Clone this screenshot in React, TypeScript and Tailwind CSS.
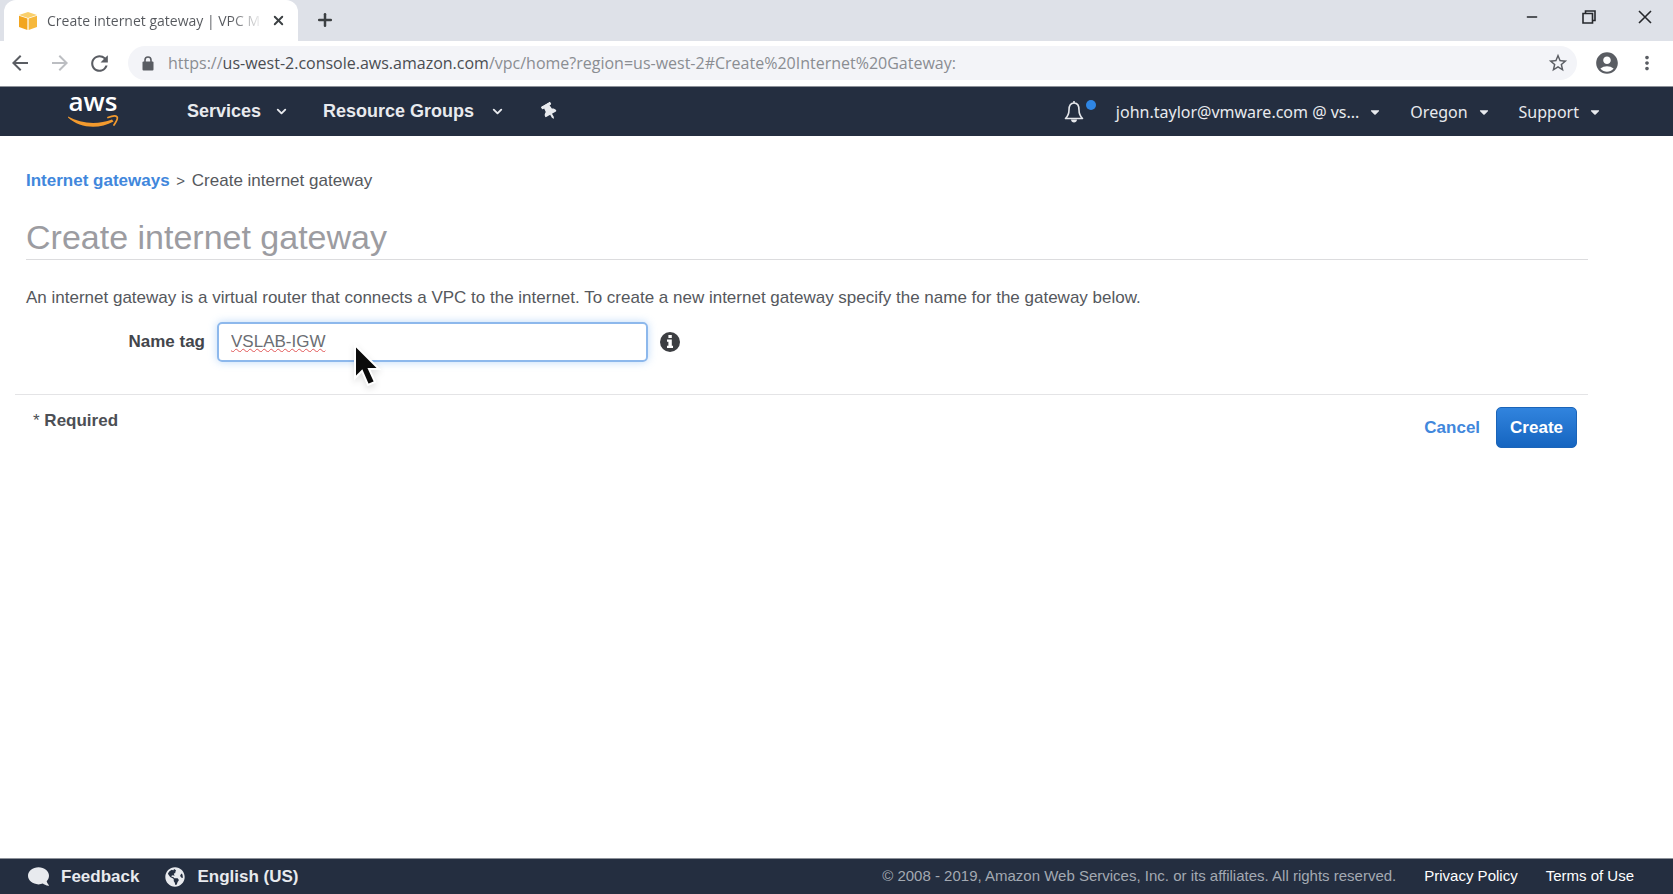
import type { ReactNode } from 'react'
import { ChevronDown, Minus, Plus, X } from 'lucide-react'
import { FaCaretDown, FaComment, FaGlobeAmericas, FaThumbtack } from 'react-icons/fa'
import {
  MdAccountCircle,
  MdArrowBack,
  MdArrowForward,
  MdMoreVert,
  MdRefresh,
  MdStarBorder,
} from 'react-icons/md'

function CubeIcon() {
  return (
    <svg viewBox="0 0 20 20" className="size-5 shrink-0" aria-hidden="true">
      <path d="M10 1 19 4 10 7 1 4z" fill="#f9cf6b" />
      <path d="M1 4.8 9.4 7.4V19L1 16z" fill="#f2a51f" />
      <path d="M19 4.8 10.6 7.4V19L19 16z" fill="#f6b83c" />
    </svg>
  )
}

function LockIcon() {
  return (
    <svg viewBox="0 0 12 15" className="h-[15px] w-3" aria-hidden="true">
      <path d="M3 6V4a3 3 0 0 1 6 0v2" fill="none" stroke="currentColor" strokeWidth="1.6" />
      <rect x="0.500" y="5.500" width="11" height="9" rx="1" fill="currentColor" />
    </svg>
  )
}

function InfoIcon() {
  return (
    <svg viewBox="0 0 20 20" className="ml-3 size-5" aria-hidden="true">
      <circle cx="10" cy="10" r="10" fill="#3c3e42" />
      <path d="M8.400 3h3.400v3H8.400zM7 7.500h4.800v6.300H13V16H7v-2.200h1.400V9.700H7z" fill="#fff" />
    </svg>
  )
}

function AwsLogo() {
  return (
    <a href="#home" className="flex w-[52px] flex-col items-center pb-[5px] text-white" aria-label="AWS home">
      <span className="font-['Open_Sans',sans-serif] text-[26px] leading-[22px] font-semibold">aws</span>
      <svg viewBox="0 0 52 14" className="mt-[3px] h-[14px] w-[52px]" aria-hidden="true">
        <path d="M1 1.500C14 9 31 10 45 4.500L46.500 6.500C32 14.500 13 13.500 1 2.500z" fill="#f29a2e" />
        <path d="M41 2.500C45 1 49 .8 50 1.800S49 7 47 10" fill="none" stroke="#f29a2e" strokeWidth="1.8" strokeLinecap="round" />
      </svg>
    </a>
  )
}

function BellIcon() {
  return (
    <svg viewBox="0 0 20 24" className="h-6 w-5" fill="none" stroke="#e5e7eb" strokeWidth="1.6" aria-hidden="true">
      <path d="M10 3C6 3 5 6 5 10c0 4-1 6-3.5 8.5h17C16 16 15 14 15 10c0-4-1-7-5-7z" strokeLinejoin="round" />
      <path d="M10 1v2" />
      <path d="M7 19.500h6c0 4-6 4-6 0z" fill="#e5e7eb" stroke="none" />
    </svg>
  )
}

function MenuButton({ children }: { children: ReactNode }) {
  return (
    <button type="button" className="flex items-center gap-[9px] font-['Noto_Sans','Open_Sans',sans-serif] text-[16px]">
      {children}
      <FaCaretDown size={14} aria-hidden="true" />
    </button>
  )
}

function TabStrip() {
  return (
    <div className="flex h-[41px] items-end bg-[#dee1e8] text-[#3c4043]">
      <div className="ml-1 flex h-full w-[294px] items-center rounded-t-xl bg-white pr-3 pl-[14px]">
        <CubeIcon />
        <span className="ml-[9px] w-[216px] bg-gradient-to-r from-[#55585d] from-85% to-transparent bg-clip-text text-[14px] whitespace-nowrap text-transparent">
          Create internet gateway | VPC M
        </span>
        <button type="button" aria-label="Close tab" className="ml-2">
          <X size={15} strokeWidth={3} />
        </button>
      </div>
      <button type="button" aria-label="New tab" className="mb-[11px] ml-[17px]">
        <Plus size={20} strokeWidth={3} />
      </button>
      <div className="mb-4 ml-auto flex items-center gap-[42px] pr-[21px] text-[#26282c]">
        <button type="button" aria-label="Minimize">
          <Minus size={16} />
        </button>
        <button type="button" aria-label="Restore">
          <svg viewBox="0 0 14 14" className="size-[14px]" fill="none" stroke="currentColor" strokeWidth="1.6">
            <path d="M1 3.5h9.500v9.500H1zM3.500 3V1H13v9.500h-2" />
          </svg>
        </button>
        <button type="button" aria-label="Close window">
          <svg viewBox="0 0 14 14" className="size-[14px]" fill="none" stroke="currentColor" strokeWidth="1.6">
            <path d="M1 1 13 13M13 1 1 13" />
          </svg>
        </button>
      </div>
    </div>
  )
}

function AddressBar() {
  return (
    <div className="flex h-[46px] items-center border-b border-[#8d9199] bg-white pr-[15px] pb-px pl-2 text-[#5a5d63]">
      <button type="button" aria-label="Back">
        <MdArrowBack size={24} />
      </button>
      <button type="button" aria-label="Forward" className="ml-4 text-[#bcbec2]">
        <MdArrowForward size={24} />
      </button>
      <button type="button" aria-label="Reload" className="ml-[15px]">
        <MdRefresh size={25} />
      </button>
      <div className="ml-4 flex h-[34px] flex-1 items-center rounded-full bg-[#f3f4f8] pr-2 pl-[14px]">
        <LockIcon />
        <p className="ml-[14px] flex-1 text-[16px] whitespace-nowrap text-[#8a8d92]">
          https://<span className="text-[#4a4d52]">us-west-2.console.aws.amazon.com</span>
          /vpc/home?region=us-west-2#Create%20Internet%20Gateway:
        </p>
        <button type="button" aria-label="Bookmark">
          <MdStarBorder size={22} />
        </button>
      </div>
      <button type="button" aria-label="Profile" className="ml-[17px]">
        <MdAccountCircle size={26} />
      </button>
      <button type="button" aria-label="Browser menu" className="ml-4">
        <MdMoreVert size={22} />
      </button>
    </div>
  )
}

function ConsoleNav() {
  return (
    <nav className="flex h-[49px] items-center bg-[#242e40] pr-[71px] pl-[67px] text-[#e8eaee]">
      <AwsLogo />
      <button type="button" className="ml-[68px] flex items-center gap-[13px] text-[18px] font-bold">
        Services
        <ChevronDown size={15} strokeWidth={3} />
      </button>
      <button type="button" className="ml-[34px] flex items-center gap-4 text-[18px] font-bold">
        Resource Groups
        <ChevronDown size={15} strokeWidth={3} />
      </button>
      <button type="button" aria-label="Pin shortcuts" className="ml-9">
        <FaThumbtack size={17} className="-rotate-30" />
      </button>
      <div className="ml-auto flex items-center gap-7">
        <button type="button" aria-label="Notifications" className="relative mr-1">
          <BellIcon />
          <span className="absolute top-0 -right-3 size-[10px] rounded-full bg-[#2f86e4]" />
        </button>
        <MenuButton>john.taylor@vmware.com @ vs...</MenuButton>
        <MenuButton>Oregon</MenuButton>
        <MenuButton>Support</MenuButton>
      </div>
    </nav>
  )
}

function Pointer() {
  return (
    <svg viewBox="-1 -1 28 44" className="absolute top-[21px] left-[136px] h-11 w-7 drop-shadow-md" aria-hidden="true">
      <path d="M1 1V34L8 27 14 41 21 38 15 25H25z" fill="#0b0b0b" stroke="#fff" strokeWidth="2" />
    </svg>
  )
}

export default function App() {
  return (
    <div className="flex min-h-screen flex-col bg-white font-['Liberation_Sans',Arial,sans-serif] text-[#55585d]">
      <header>
        <div className="font-['Open_Sans','Noto_Sans',sans-serif]">
          <TabStrip />
          <AddressBar />
        </div>
        <ConsoleNav />
      </header>

      <main className="flex-1 pr-[85px] pl-[15px]">
        <div className="pt-[33px] pl-[11px]">
          <p className="text-[17px] leading-6">
            <a href="#gateways" className="font-bold text-[#4187dc]">
              Internet gateways
            </a>{' '}
            <span className="mx-[2px] text-[15px]">&gt;</span> Create internet gateway
          </p>
          <h1 className="mt-[23px] border-b border-[#dcdcde] pb-px text-[34px] leading-[42px] text-[#9c9ca1]">
            Create internet gateway
          </h1>
          <p className="mt-[26px] text-[17px] leading-6">
            An internet gateway is a virtual router that connects a VPC to the internet. To create a new internet
            gateway specify the name for the gateway below.
          </p>
        </div>

        <form>
          <div className="mt-3 flex items-center border-b border-[#e4e4e6] pb-8">
            <label htmlFor="name-tag" className="w-[190px] text-right text-[17px] font-bold text-[#43464b]">
              Name tag
            </label>
            <div className="relative ml-3">
              <input
                id="name-tag"
                type="text"
                defaultValue="VSLAB-IGW"
                spellCheck={false}
                className="h-10 w-[431px] rounded-[5px] border-2 border-[#8db8ec] px-3 text-[17px] text-[#6b6e73] underline decoration-[#e25656] decoration-wavy decoration-1 shadow-[0_0_8px_rgba(90,160,240,0.4)] outline-none"
              />
              <Pointer />
            </div>
            <InfoIcon />
          </div>
          <div className="flex items-start justify-between pt-3 pr-[11px] pl-[18px] text-[17px] font-bold">
            <p className="leading-7 text-[#4c4f55]">
              <span className="font-normal">*</span> Required
            </p>
            <div className="flex items-center gap-4">
              <a href="#cancel" className="text-[#4187dc]">
                Cancel
              </a>
              <button
                type="button"
                className="h-[41px] rounded-[5px] border border-[#1b64b8] bg-gradient-to-b from-[#3184de] to-[#1565c0] px-[13px] text-white"
              >
                Create
              </button>
            </div>
          </div>
        </form>
      </main>

      <footer className="flex h-9 items-center border-t border-[#8d9199] bg-[#242e40] pr-[39px] pl-7 text-white">
        <button type="button" className="flex items-center gap-3 text-[17px] font-bold text-[#e8eaee]">
          <FaComment size={21} className="-scale-x-100" />
          Feedback
        </button>
        <button type="button" className="ml-[26px] flex items-center gap-3 text-[17px] font-bold text-[#e8eaee]">
          <FaGlobeAmericas size={20} />
          English (US)
        </button>
        <div className="ml-auto flex items-center gap-7 text-[15px]">
          <span className="text-[#a3a9b2]">
            © 2008 - 2019, Amazon Web Services, Inc. or its affiliates. All rights reserved.
          </span>
          <a href="#privacy">Privacy Policy</a>
          <a href="#terms">Terms of Use</a>
        </div>
      </footer>
    </div>
  )
}
